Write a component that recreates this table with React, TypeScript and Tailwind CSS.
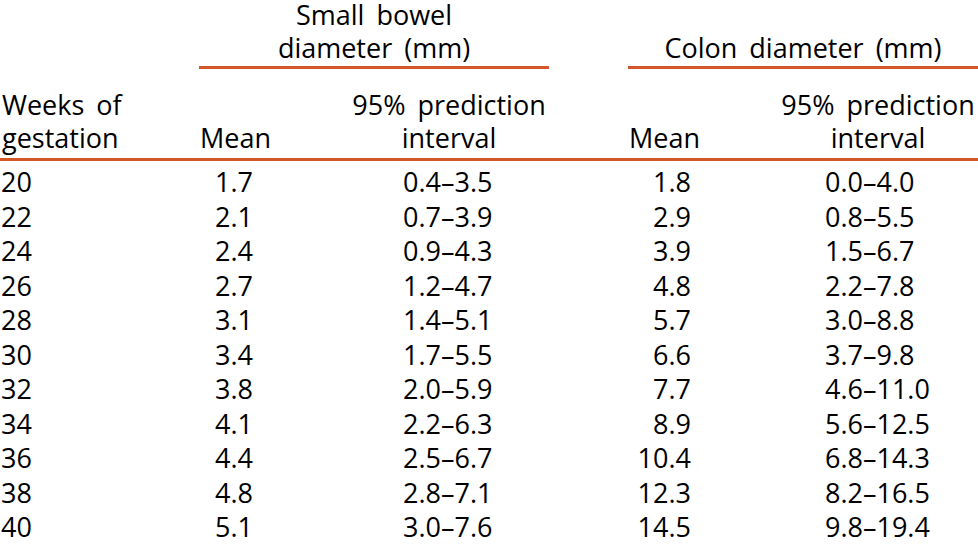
import React from "react";

const rows: [string, string, string, string, string][] = [
  ["20", "1.7", "0.4–3.5", "1.8", "0.0–4.0"],
  ["22", "2.1", "0.7–3.9", "2.9", "0.8–5.5"],
  ["24", "2.4", "0.9–4.3", "3.9", "1.5–6.7"],
  ["26", "2.7", "1.2–4.7", "4.8", "2.2–7.8"],
  ["28", "3.1", "1.4–5.1", "5.7", "3.0–8.8"],
  ["30", "3.4", "1.7–5.5", "6.6", "3.7–9.8"],
  ["32", "3.8", "2.0–5.9", "7.7", "4.6–11.0"],
  ["34", "4.1", "2.2–6.3", "8.9", "5.6–12.5"],
  ["36", "4.4", "2.5–6.7", "10.4", "6.8–14.3"],
  ["38", "4.8", "2.8–7.1", "12.3", "8.2–16.5"],
  ["40", "5.1", "3.0–7.6", "14.5", "9.8–19.4"],
];

const cols = "grid grid-cols-[199px_130px_220px_79px_130px_220px]";

export default function App() {
  return (
    <div
      className="w-[978px] h-[544px] bg-white text-black overflow-hidden text-[27px] [word-spacing:5px]"
      style={{ fontFamily: '"Open Sans", "Noto Sans", sans-serif' }}
    >
      {/* Group header */}
      <div className={`${cols} mt-[-2px] leading-[33px]`}>
        <div />
        <div className="col-span-2 flex flex-col">
          <div className="text-center">
            Small bowel
            <br />
            diameter (mm)
          </div>
          <div className="mt-[2px] h-[3px] bg-[#d4572a]" />
        </div>
        <div />
        <div className="col-span-2 flex flex-col">
          <div className="text-center">
            <br />
            Colon diameter (mm)
          </div>
          <div className="mt-[2px] h-[3px] bg-[#d4572a]" />
        </div>
      </div>

      {/* Column header */}
      <div className={`${cols} mt-[19px] leading-[33px] items-end`}>
        <div className="pl-[2px]">
          Weeks of
          <br />
          gestation
        </div>
        <div className="pl-[1px]">Mean</div>
        <div className="pl-[20px] w-[220px] text-center">
          <div className="w-[200px] whitespace-nowrap">
            95% prediction
            <br />
            interval
          </div>
        </div>
        <div />
        <div className="pl-[1px]">Mean</div>
        <div className="pl-[20px] text-center">
          <div className="w-[200px] whitespace-nowrap">
            95% prediction
            <br />
            interval
          </div>
        </div>
      </div>
      <div className="mt-[4px] h-[3px] bg-[#d4572a]" />

      {/* Body */}
      <div className="mt-[4px] flex flex-col">
        {rows.map((r) => (
          <div key={r[0]} className={`${cols} leading-[34.5px] h-[34.5px]`}>
            <div className="pl-[1px]">{r[0]}</div>
            <div className="pr-[76px] text-right">{r[1]}</div>
            <div className="pl-[74px] whitespace-nowrap">{r[2]}</div>
            <div />
            <div className="pr-[67px] text-right">{r[3]}</div>
            <div className="pl-[67px] whitespace-nowrap">{r[4]}</div>
          </div>
        ))}
      </div>
    </div>
  );
}
